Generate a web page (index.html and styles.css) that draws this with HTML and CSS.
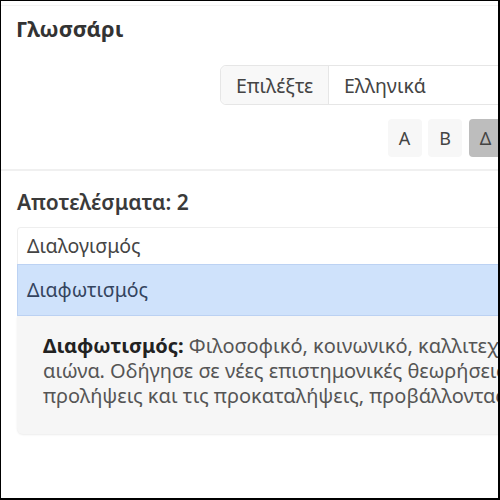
FILE: index.html
```html
<!DOCTYPE html>
<html lang="el">

<head>
    <meta charset="UTF-8">
    <meta name="viewport" content="width=device-width, initial-scale=1.0">
    <title>Γλωσσάρι</title>
    <link rel="stylesheet" href="styles.css">
</head>

<body>
    <div class="frame">
        <div class="page">
            <div class="glossary-head">
                <h1 class="title">Γλωσσάρι</h1>
                <div class="controls">
                    <div class="input-group">
                        <span class="input-label">Επιλέξτε</span>
                        <span class="input-select">Ελληνικά</span>
                    </div>
                    <div class="letters">
                        <button class="letter">Α</button>
                        <button class="letter">Β</button>
                        <button class="letter active">Δ</button>
                        <button class="letter">Ε</button>
                        <button class="letter">Θ</button>
                        <button class="letter">Κ</button>
                        <button class="letter">Π</button>
                        <button class="letter">Φ</button>
                    </div>
                </div>
            </div>
            <div class="results">
                <div class="results-count">Αποτελέσματα: 2</div>
                <ul class="term-list">
                    <li class="term">Διαλογισμός</li>
                    <li class="term selected">Διαφωτισμός</li>
                </ul>
                <div class="definition">
                    <b>Διαφωτισμός:</b> Φιλοσοφικό, κοινωνικό, καλλιτεχνικό και πολιτικό κίνημα του 18ου<br>
                    αιώνα. Οδήγησε σε νέες επιστημονικές θεωρήσεις και καταπολέμησε τις<br>
                    προλήψεις και τις προκαταλήψεις, προβάλλοντας τη λογική και την ελευθερία.
                </div>
            </div>
        </div>
    </div>
</body>

</html>
```

FILE: styles.css
```css
/* σελίδα */
body {
    margin: 0;
    padding: 0;
    background-color: #fff;
    font-family: "Noto Sans", "Open Sans", sans-serif;
    color: #333;
}

/* μαύρο πλαίσιο γύρω από την εικόνα */
.frame {
    width: 500px;
    height: 500px;
    box-sizing: border-box;
    border: 1px solid #000;
    border-right-width: 2px;
    border-bottom-width: 2px;
    overflow: hidden;
}

.page {
    width: 720px;
}

/* κεφαλίδα */
.glossary-head {
    padding: 8px 16px 12px 15px;
    border-top: 1px solid #f3f3f3;
    border-bottom: 2px solid #f0f0f0;
    margin-top: 4px;
}

.title {
    margin: 0;
    font-size: 22px;
    font-weight: 700;
    color: #333;
    line-height: 28px;
}

.controls {
    display: flex;
    flex-direction: column;
    align-items: flex-end;
    margin-top: 23px;
}

.input-group {
    display: flex;
    width: 485px;
    height: 40px;
    border: 1px solid #e6e6e6;
    border-radius: 6px;
    box-sizing: border-box;
    font-size: 19.5px;
    color: #444;
}

.input-label {
    display: flex;
    align-items: center;
    padding: 0 15px;
    background-color: #f8f8f8;
    border-right: 1px solid #e6e6e6;
    border-radius: 6px 0 0 6px;
    width: 108px;
    box-sizing: border-box;
}

.input-select {
    display: flex;
    align-items: center;
    padding: 0 15px;
}

.letters {
    display: flex;
    gap: 6.5px;
    margin-top: 14px;
}

.letter {
    width: 34px;
    height: 38px;
    padding: 0;
    border: none;
    border-radius: 4px;
    background-color: #f7f7f7;
    font-family: inherit;
    font-size: 18px;
    color: #444;
}

.letter.active {
    background-color: #bdbdbd;
}

/* αποτελέσματα */
.results {
    padding: 18px 16px 0 16px;
}

.results-count {
    font-size: 21px;
    font-weight: 600;
    line-height: 26px;
    color: #3a3a3a;
}

.term-list {
    list-style: none;
    margin: 12px 0 0 0;
    padding: 0;
}

.term {
    font-size: 19.5px;
    line-height: 26px;
    padding: 5px 9px;
    border: 1px solid #eee;
    border-bottom: none;
    border-radius: 4px 4px 0 0;
    color: #444;
}

.term.selected {
    padding: 12px 9px;
    background-color: #cfe2fb;
    border: 1px solid #bcd2f3;
    border-radius: 0;
    color: #34445e;
}

.definition {
    background-color: #f6f6f6;
    padding: 17px 26px 26px 26px;
    font-size: 20px;
    line-height: 25px;
    color: #555;
    border-radius: 0 0 6px 6px;
    box-shadow: 0 1px 2px rgba(0, 0, 0, 0.08);
    white-space: nowrap;
}

.definition b {
    color: #222;
}
```
